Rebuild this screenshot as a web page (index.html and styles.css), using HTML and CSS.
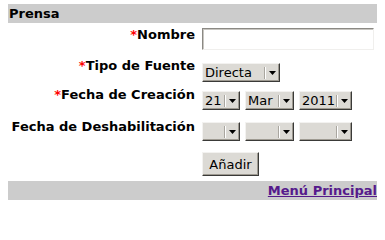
FILE: index.html
```html
<!DOCTYPE html>
<html lang="es">
<head>
<meta charset="utf-8">
<title>Prensa</title>
<link rel="stylesheet" href="styles.css">
</head>
<body>
<div class="page">
  <div class="bar title">Prensa</div>
  <form class="form">
    <div class="row row-nombre">
      <label class="label"><span class="req">*</span>Nombre</label>
      <input class="text" type="text">
    </div>
    <div class="row row-tipo">
      <label class="label"><span class="req">*</span>Tipo de Fuente</label>
      <span class="select w-directa"><select><option>Directa</option></select><span class="arrow"><svg width="7" height="4" viewBox="0 0 7 4"><path d="M0 0H7L3.5 4Z" fill="#000"/></svg></span></span>
    </div>
    <div class="row row-creacion">
      <label class="label"><span class="req">*</span>Fecha de Creación</label>
      <div class="group">
        <span class="select w-day"><select><option>21</option></select><span class="arrow"><svg width="7" height="4" viewBox="0 0 7 4"><path d="M0 0H7L3.5 4Z" fill="#000"/></svg></span></span>
        <span class="select w-month"><select><option>Mar</option></select><span class="arrow"><svg width="7" height="4" viewBox="0 0 7 4"><path d="M0 0H7L3.5 4Z" fill="#000"/></svg></span></span>
        <span class="select w-year"><select><option>2011</option></select><span class="arrow"><svg width="7" height="4" viewBox="0 0 7 4"><path d="M0 0H7L3.5 4Z" fill="#000"/></svg></span></span>
      </div>
    </div>
    <div class="row row-deshab">
      <label class="label">Fecha de Deshabilitación</label>
      <div class="group">
        <span class="select w-day"><select><option></option></select><span class="arrow"><svg width="7" height="4" viewBox="0 0 7 4"><path d="M0 0H7L3.5 4Z" fill="#000"/></svg></span></span>
        <span class="select w-month"><select><option></option></select><span class="arrow"><svg width="7" height="4" viewBox="0 0 7 4"><path d="M0 0H7L3.5 4Z" fill="#000"/></svg></span></span>
        <span class="select w-year"><select><option></option></select><span class="arrow"><svg width="7" height="4" viewBox="0 0 7 4"><path d="M0 0H7L3.5 4Z" fill="#000"/></svg></span></span>
      </div>
    </div>
    <div class="row row-boton">
      <span class="label"></span>
      <button class="button" type="button">Añadir</button>
    </div>
  </form>
  <div class="bar footer"><a class="link" href="#">Menú Principal</a></div>
</div>
</body>
</html>
```

FILE: styles.css
```css
html, body {
  background: #fff;
}
body {
  margin: 4px 8px;
  font-family: "DejaVu Sans", sans-serif;
  font-size: 13px;
  color: #000;
}
.bar {
  background: #cccccc;
  height: 19px;
  line-height: 19px;
  font-weight: bold;
  white-space: nowrap;
}
.title {
  padding-left: 1px;
}
.footer {
  text-align: right;
}
.link {
  color: #551a8b;
  text-decoration: underline;
}
.form {
  margin: 0;
  display: flex;
  flex-direction: column;
}
.row {
  display: flex;
  align-items: flex-start;
  gap: 7px;
}
.label {
  width: 187px;
  flex: none;
  text-align: right;
  font-weight: bold;
  line-height: 15px;
  white-space: nowrap;
}
.req {
  color: #ff0000;
}
.row-nombre { height: 35px; padding-top: 4px; box-sizing: border-box; }
.row-nombre .text { margin-top: 1px; }
.row-tipo { height: 29px; }
.row-tipo .select { margin-top: 5px; }
.row-creacion { height: 32px; }
.row-creacion .group { margin-top: 4px; }
.row-deshab { height: 31px; }
.row-deshab .group { margin-top: 3px; }
.row-boton { height: 31px; }
.row-boton .button { margin-top: 2px; }

.text {
  box-sizing: border-box;
  width: 172px;
  height: 22px;
  margin: 0;
  padding: 0 3px;
  border: 1px solid;
  border-color: #8b8984 #f0efed #f0efed #8b8984;
  box-shadow: inset 1px 1px 0 #c8c6c1;
  background: #fff;
  font: 13px "DejaVu Sans", sans-serif;
}
.group {
  display: flex;
  gap: 5px;
}
.select {
  box-sizing: border-box;
  display: inline-flex;
  align-items: center;
  height: 19px;
  background: #dcdad5;
  border: 1px solid;
  border-color: #f3f2f0 #3a3a38 #3a3a38 #f3f2f0;
  box-shadow: inset -1px -1px 0 #9e9a91;
}
.select select {
  appearance: none;
  -webkit-appearance: none;
  flex: 1;
  min-width: 0;
  height: 17px;
  margin: 0;
  padding: 0 0 0 2px;
  border: 0;
  background: transparent;
  font: 13px "DejaVu Sans", sans-serif;
  color: #000;
  outline: none;
}
.arrow {
  flex: none;
  width: 14px;
  height: 12px;
  display: flex;
  align-items: center;
  justify-content: center;
  border-left: 1px solid #a9a69f;
  box-shadow: inset 1px 0 0 #ffffff;
}
.arrow svg {
  display: block;
  margin-left: 1px;
}
.w-directa { width: 78px; }
.w-day { width: 38px; }
.w-month { width: 49px; }
.w-year { width: 53px; }

.button {
  box-sizing: border-box;
  width: 57px;
  height: 24px;
  margin: 0;
  padding: 0;
  background: #dcdad5;
  border: 1px solid;
  border-color: #f3f2f0 #3a3a38 #3a3a38 #f3f2f0;
  box-shadow: inset -1px -1px 0 #9e9a91;
  font: 13px "DejaVu Sans", sans-serif;
  color: #000;
}
```
